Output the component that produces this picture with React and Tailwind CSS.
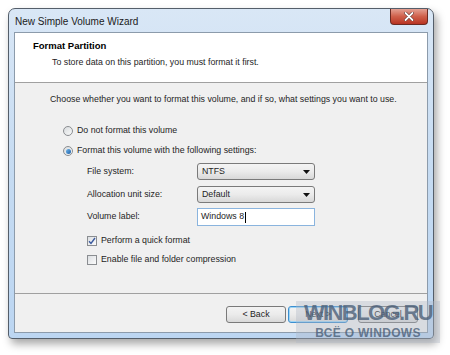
import { useState } from 'react'

const font = { fontFamily: '"Liberation Sans", Arial, sans-serif' }

function Radio({ checked, label }) {
  return (
    <div className="flex items-center h-[14px] pl-[48px]">
      <span className="w-[10px] h-[10px] rounded-full border border-[#8a8d91] bg-gradient-to-br from-[#d9dcde] to-[#f8f9f9] flex items-center justify-center">
        {checked && <span className="w-[5px] h-[5px] rounded-full bg-gradient-to-br from-[#6fb6ea] to-[#1c5fa8]" />}
      </span>
      <span className="ml-[4px] text-[8.8px] text-[#1e1e1e]">{label}</span>
    </div>
  )
}

function Check({ checked, label }) {
  return (
    <div className="flex items-center h-[12px] pl-[72px]">
      <span className="w-[10px] h-[10px] border border-[#8a8d91] bg-gradient-to-br from-[#dcdfe2] to-[#fbfbfb] flex items-center justify-center">
        {checked && (
          <svg width="8" height="8" viewBox="0 0 8 8">
            <path d="M1 4.2 L3 6.5 L7 1" fill="none" stroke="#3b5a9e" strokeWidth="1.4" />
          </svg>
        )}
      </span>
      <span className="ml-[4px] text-[8.8px] text-[#1e1e1e]">{label}</span>
    </div>
  )
}

function Combo({ value }) {
  return (
    <div className="h-[17px] w-[118px] rounded-[3px] border border-[#7a7a7a] bg-gradient-to-b from-[#f4f4f4] via-[#ebebeb] to-[#d8d8d8] flex items-center justify-between px-[4px]">
      <span className="text-[8.8px] text-[#1e1e1e]">{value}</span>
      <svg width="7" height="4" viewBox="0 0 7 4"><path d="M0 0 H7 L3.5 4 Z" fill="#111" /></svg>
    </div>
  )
}

function Button({ children, primary }) {
  return (
    <div className={`w-[60px] h-[17px] rounded-[3px] border ${primary ? 'border-[#3c8fd0] shadow-[inset_0_0_0_1px_#9fd5f5]' : 'border-[#7a7a7a]'} bg-gradient-to-b from-[#f3f3f3] via-[#ebebeb] to-[#d9d9d9] flex items-center justify-center text-[8.8px] text-[#1e1e1e]`}>
      {children}
    </div>
  )
}

export default function App() {
  const [label] = useState('Windows 8')

  return (
    <div className="relative w-[450px] h-[355px] bg-white overflow-hidden" style={font}>
      <div className="pt-[8px] pl-[8px]">
        <div className="w-[426px] h-[331px] rounded-t-[7px] rounded-b-[4px] border border-[#545e6a] bg-gradient-to-b from-[#d9e7f6] via-[#c5dbf2] to-[#bcd6f2] shadow-[3px_5px_9px_rgba(0,0,0,0.35)] flex flex-col">
          <div className="h-[23px] flex items-start justify-between pl-[6px] pr-[5px]">
            <span className="mt-[7px] text-[10px] leading-[12px] text-[#1b1b1b]">New Simple Volume Wizard</span>
            <div className="w-[38px] h-[16px] rounded-b-[4px] border border-t-0 border-[#6b2a22] bg-gradient-to-b from-[#e3a093] via-[#cf5f4a] to-[#b83322] flex items-center justify-center">
              <svg width="10" height="9" viewBox="0 0 10 9">
                <path d="M1.5 1 L8.5 8 M8.5 1 L1.5 8" stroke="#5a2a24" strokeWidth="3" strokeLinecap="round" />
                <path d="M1.5 1 L8.5 8 M8.5 1 L1.5 8" stroke="#fff" strokeWidth="1.8" strokeLinecap="round" />
              </svg>
            </div>
          </div>

          <div className="flex-1 mx-[5px] mb-[5px] border border-[#8c9bab] bg-[#f0f0f0] flex flex-col">
            <div className="h-[50px] bg-white border-b border-[#a0a0a0] pt-[7px]">
              <div className="pl-[18px] text-[9.5px] leading-[12px] font-bold text-black">Format Partition</div>
              <div className="pl-[37px] mt-[4px] text-[8.8px] leading-[12px] text-[#1e1e1e]">To store data on this partition, you must format it first.</div>
            </div>

            <div className="flex-1 flex flex-col pt-[10px]">
              <div className="pl-[35px] text-[8.8px] leading-[12px] text-[#1e1e1e]">Choose whether you want to format this volume, and if so, what settings you want to use.</div>
              <div className="mt-[19px]"><Radio label="Do not format this volume" /></div>
              <div className="mt-[6px]"><Radio checked label="Format this volume with the following settings:" /></div>

              <div className="mt-[5px] flex items-center pl-[72px]">
                <span className="w-[110px] text-[8.8px] text-[#1e1e1e]">File system:</span>
                <Combo value="NTFS" />
              </div>
              <div className="mt-[6px] flex items-center pl-[72px]">
                <span className="w-[110px] text-[8.8px] text-[#1e1e1e]">Allocation unit size:</span>
                <Combo value="Default" />
              </div>
              <div className="mt-[5px] flex items-center pl-[72px]">
                <span className="w-[110px] text-[8.8px] text-[#1e1e1e]">Volume label:</span>
                <div className="w-[118px] h-[18px] border border-[#8ab4de] bg-white flex items-center pl-[3px]">
                  <span className="text-[8.8px] text-[#1e1e1e]">{label}</span>
                  <span className="w-px h-[11px] bg-black ml-[1px]" />
                </div>
              </div>

              <div className="mt-[9px]"><Check checked label="Perform a quick format" /></div>
              <div className="mt-[7px]"><Check label="Enable file and folder compression" /></div>
            </div>

            <div className="h-[39px] border-t border-[#a0a0a0] flex items-start justify-end pt-[12px] pr-[9px]">
              <Button>&lt; Back</Button>
              <div className="ml-[2px]"><Button primary>Next &gt;</Button></div>
              <div className="ml-[10px]"><Button>Cancel</Button></div>
            </div>
          </div>
        </div>
      </div>

      <div className="absolute left-[296px] top-[301px] w-[144px] h-[42px] bg-[rgba(175,185,198,0.38)] flex flex-col items-center pt-[1px]">
        <span className="text-[22px] leading-[22px] font-bold tracking-[-1.6px] text-[rgba(75,95,120,0.8)]">WINBLOG.RU</span>
        <span className="text-[12px] leading-[13px] font-bold tracking-[0.3px] text-[rgba(75,95,120,0.8)] mt-[3px]">ВСЁ О WINDOWS</span>
      </div>
    </div>
  )
}
